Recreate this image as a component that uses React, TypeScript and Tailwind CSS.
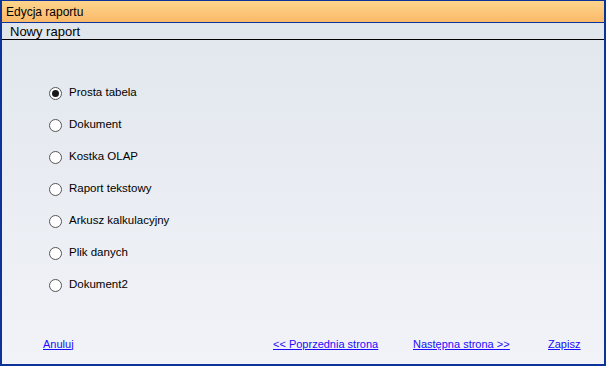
import { useState } from "react"

const options = [
  "Prosta tabela",
  "Dokument",
  "Kostka OLAP",
  "Raport tekstowy",
  "Arkusz kalkulacyjny",
  "Plik danych",
  "Dokument2",
]

function Radio({ checked }: { checked: boolean }) {
  return (
    <span className="flex h-[13px] w-[13px] items-center justify-center rounded-full border border-[#555] bg-white">
      {checked && <span className="h-[7px] w-[7px] rounded-full bg-[#1a1a1a]" />}
    </span>
  )
}

function App() {
  const [selected, setSelected] = useState(0)

  return (
    <div
      className="flex h-[366px] w-[606px] flex-col border-x-2 border-t border-b-2 border-[#0b339a] text-[12px] text-black"
      style={{ fontFamily: '"Liberation Sans", Arial, sans-serif' }}
    >
      <div className="flex h-[22px] items-center border-b border-[#0b339a] bg-gradient-to-b from-[#fdd58c] to-[#fbb868] pl-[4px] leading-none">
        Edycja raportu
      </div>
      <div className="flex h-[17px] items-center border-b border-black bg-[#e0e6eb] pl-[8px] text-[13px] leading-none">
        Nowy raport
      </div>

      <div className="flex flex-1 flex-col justify-between bg-gradient-to-b from-[#e2e8ee] to-[#f2f3f8] pt-[37px] pb-[12px]">
        <ul className="flex flex-col text-[11.5px]">
          {options.map((label, i) => (
            <li
              key={label}
              className="flex h-[32px] cursor-default items-center gap-[7px] pl-[47px]"
              onClick={() => setSelected(i)}
            >
              <Radio checked={selected === i} />
              <span>{label}</span>
            </li>
          ))}
        </ul>

        <div className="flex h-[16px] items-center pl-[41px] text-[11px] text-[#1a0dff] underline">
          <a className="w-[230px]">Anuluj</a>
          <a className="w-[140px]">&lt;&lt; Poprzednia strona</a>
          <a className="w-[135px]">Następna strona &gt;&gt;</a>
          <a>Zapisz</a>
        </div>
      </div>
    </div>
  )
}

export default App
